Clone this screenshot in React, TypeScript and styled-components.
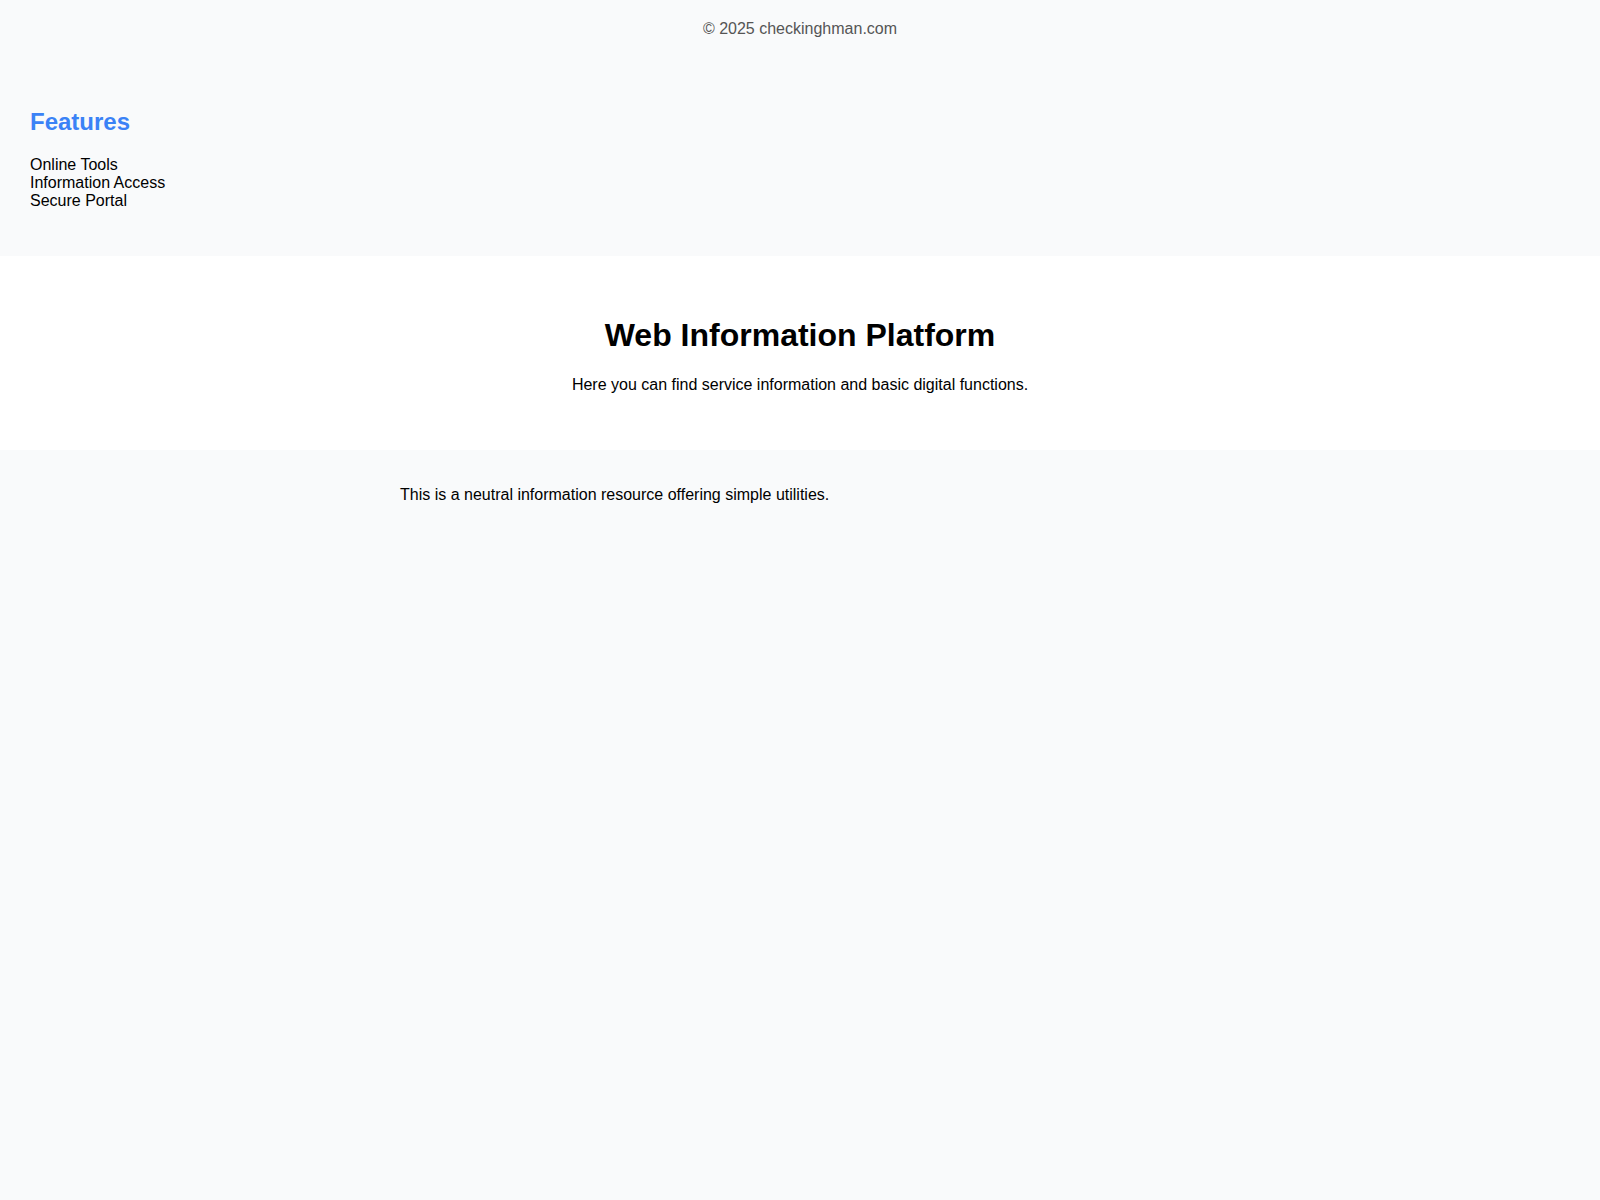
import React from 'react';
import styled, {createGlobalStyle} from 'styled-components';

const GlobalStyle = createGlobalStyle`
  body {
    margin: 0;
    background: #f9fafb;
    color: #000;
    font-family: "Liberation Sans", Arial, sans-serif;
    font-size: 16px;
  }
`

const features = ['Online Tools', 'Information Access', 'Secure Portal'];

const App: React.FC = () => {
    return (
        <>
            <GlobalStyle/>
            <Footer>© 2025 checkinghman.com</Footer>
            <Aside>
                <AsideTitle>Features</AsideTitle>
                <FeatureList>
                    {features.map(f => <li key={f}>{f}</li>)}
                </FeatureList>
            </Aside>
            <Hero>
                <HeroTitle>Web Information Platform</HeroTitle>
                <HeroText>Here you can find service information and basic digital functions.</HeroText>
            </Hero>
            <Main>
                <p>This is a neutral information resource offering simple utilities.</p>
            </Main>
        </>
    )
};

const Footer = styled.footer`
  padding: 20px;
  text-align: center;
  color: #555;
`

const Aside = styled.aside`
  padding: 30px;
`

const AsideTitle = styled.h2`
  font-size: 24px;
  margin: 0.83em 0;
  color: #3b82f6;
`

const FeatureList = styled.ul`
  list-style: none;
  padding: 0;
  margin: 0 0 16px;
`

const Hero = styled.header`
  background: #fff;
  padding: 40px 20px;
  text-align: center;
`

const HeroTitle = styled.h1`
  font-size: 32px;
  margin: 0.67em 0;
`

const HeroText = styled.p`
  margin: 1em 0;
`

const Main = styled.main`
  max-width: 800px;
  margin: 0 auto;
  padding: 20px 0;
`

export default App;
